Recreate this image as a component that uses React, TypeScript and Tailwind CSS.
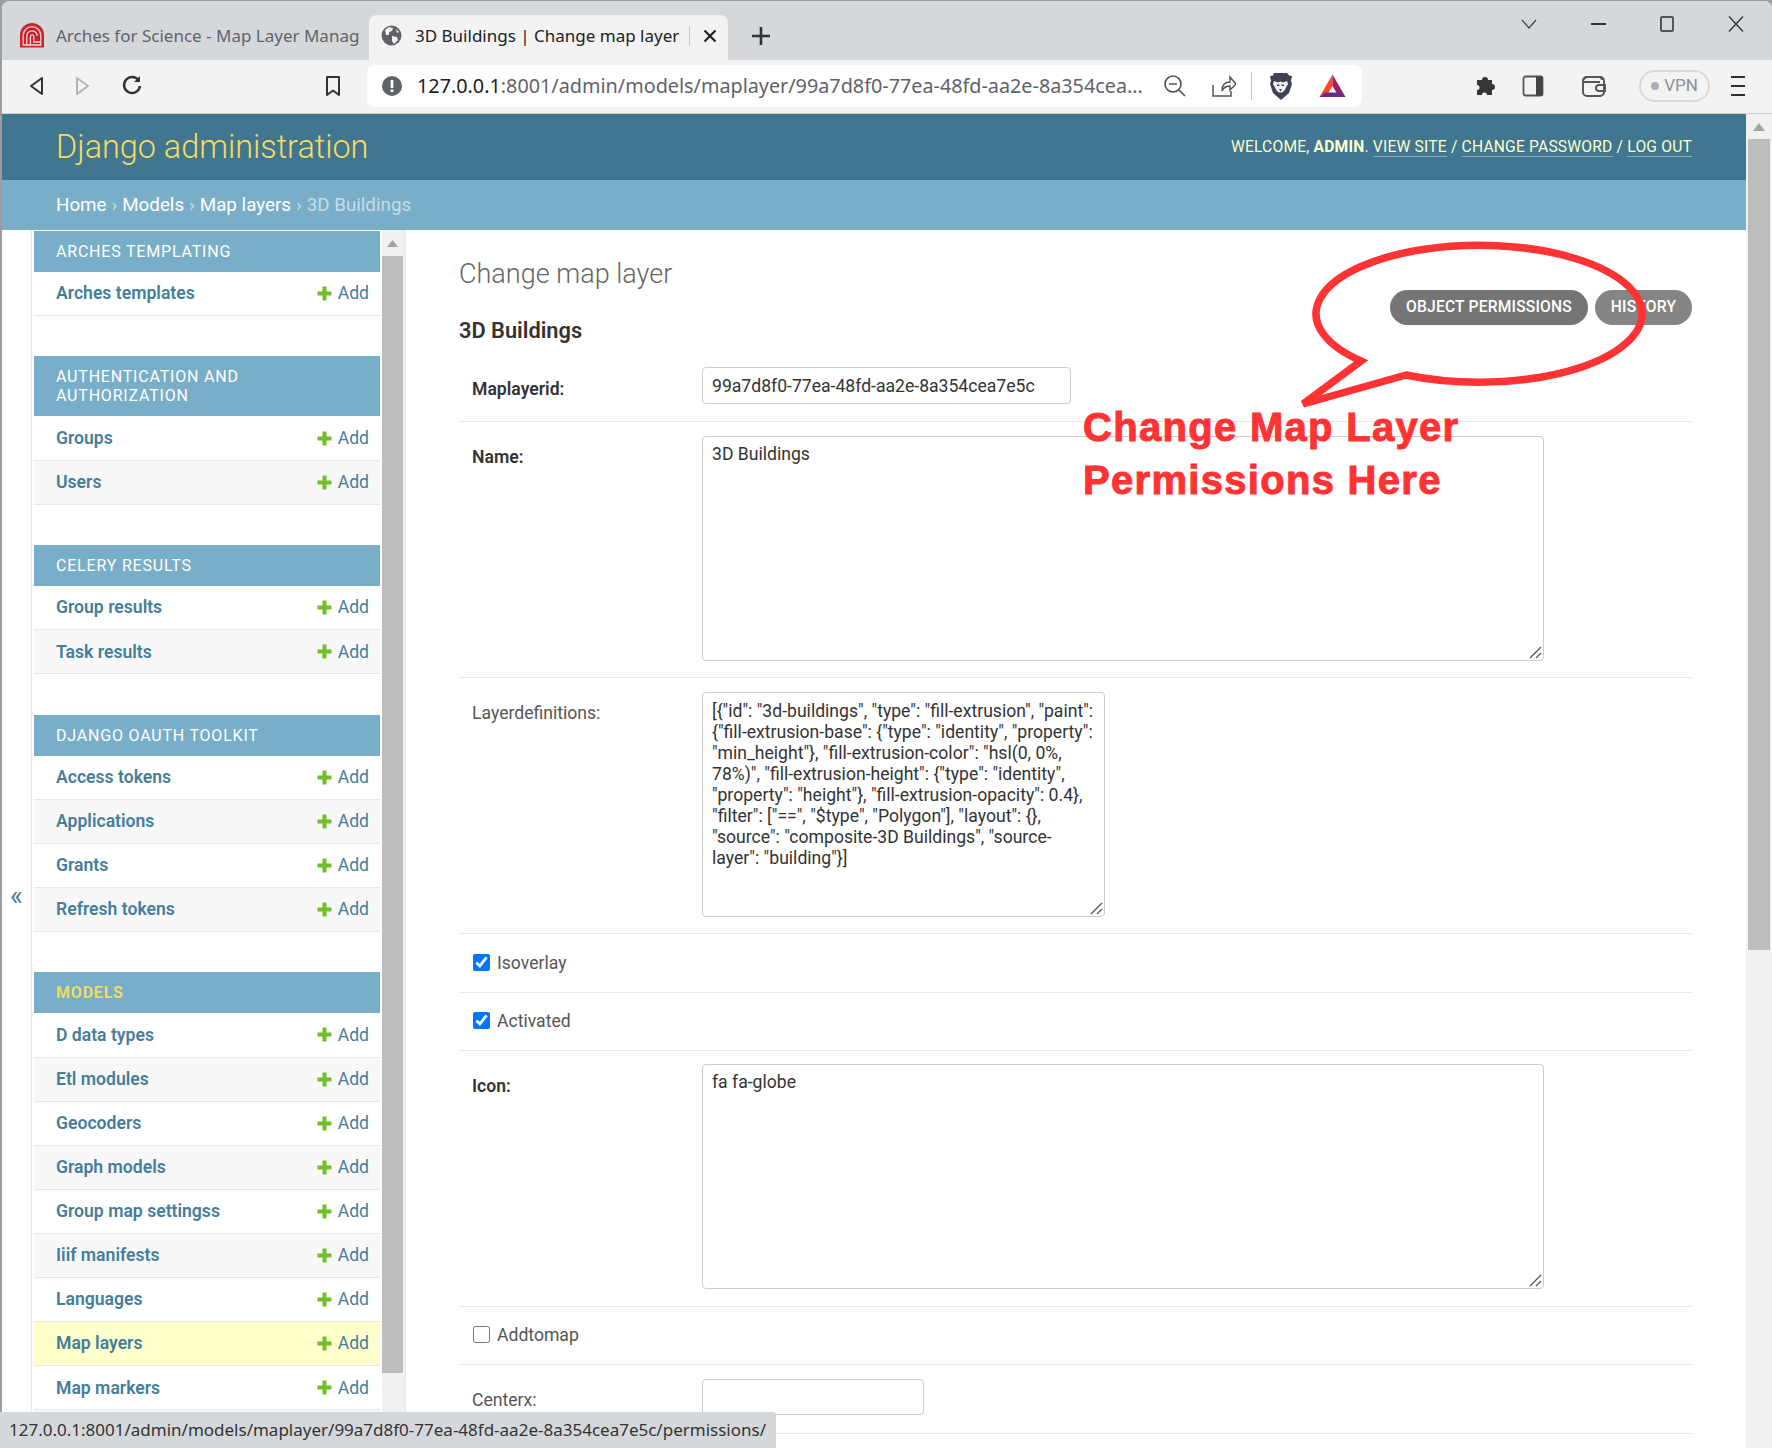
import React from 'react';

const sections = [
  { title: 'Arches templating', items: ['Arches templates'] },
  { title: 'Authentication and Authorization', items: ['Groups', 'Users'] },
  { title: 'Celery results', items: ['Group results', 'Task results'] },
  { title: 'Django OAuth Toolkit', items: ['Access tokens', 'Applications', 'Grants', 'Refresh tokens'] },
  {
    title: 'Models',
    active: true,
    items: ['D data types', 'Etl modules', 'Geocoders', 'Graph models', 'Group map settingss', 'Iiif manifests', 'Languages', 'Map layers', 'Map markers', 'Nodes'],
  },
];

const layerDefs =
  '[{"id": "3d-buildings", "type": "fill-extrusion", "paint": {"fill-extrusion-base": {"type": "identity", "property": "min_height"}, "fill-extrusion-color": "hsl(0, 0%, 78%)", "fill-extrusion-height": {"type": "identity", "property": "height"}, "fill-extrusion-opacity": 0.4}, "filter": ["==", "$type", "Polygon"], "layout": {}, "source": "composite-3D Buildings", "source-layer": "building"}]';

const PlusIcon = () => (
  <svg width="15" height="15" viewBox="0 0 15 15" className="shrink-0">
    <path d="M5.5 0.5h4v5h5v4h-5v5h-4v-5h-5v-4h5z" fill="#70bf2b" />
  </svg>
);

const ChromeGlyph = ({ children, className = '' }: { children: React.ReactNode; className?: string }) => (
  <svg width="26" height="26" viewBox="0 0 26 26" fill="none" stroke="#333" strokeWidth="2" className={className}>
    {children}
  </svg>
);

const Row = ({ name, shaded, current }: { name: string; shaded: boolean; current: boolean }) => (
  <div
    className={`flex h-[44.1px] items-center justify-between border-b border-[#e8e8e8] pl-[22px] pr-[11px] text-[17.6px] ${
      current ? 'bg-[#ffffcc]' : shaded ? 'bg-[#f8f8f8]' : 'bg-white'
    }`}
  >
    <span className="font-semibold text-[#447e9b]">{name}</span>
    <span className="flex items-center gap-[6px] text-[#447e9b]">
      <PlusIcon />
      Add
    </span>
  </div>
);

const Sidebar = () => (
  <div className="relative flex h-full w-[374px] shrink-0 overflow-hidden border-r border-[#e8e8e8]">
    <div className="ml-[2px] w-[346px] shrink-0 pt-px">
      {sections.map((s) => (
        <div key={s.title} className="mb-[40.4px]">
          <div
            className={`px-[22px] pt-[11px] pb-[11px] text-[16px] leading-[19px] tracking-[0.8px] uppercase ${
              s.active ? 'font-semibold text-[#f5dd5d]' : 'text-white'
            } bg-[#79aec8]`}
          >
            {s.title}
          </div>
          {s.items.map((item, i) => (
            <Row key={item} name={item} shaded={i % 2 === 1} current={item === 'Map layers'} />
          ))}
        </div>
      ))}
    </div>
    <div className="ml-[2px] flex w-[23px] shrink-0 flex-col bg-[#f1f1f1]">
      <div className="flex h-[26px] w-[21px] items-center justify-center">
        <svg width="11" height="7" viewBox="0 0 11 7">
          <path d="M5.5 0L11 7H0z" fill="#a3a3a3" />
        </svg>
      </div>
      <div className="h-[1117px] w-[21px] bg-[#bdbdbd]" />
    </div>
  </div>
);

const labelClass = 'w-[243px] shrink-0 pl-[13px] text-[17.6px]';
const boxClass = 'block rounded-[4px] border border-[#cccccc] bg-white px-[9px] text-[17.6px] leading-[21px] text-[#333]';

const CheckRow = ({ label, checked, height }: { label: string; checked: boolean; height: string }) => (
  <div className={`flex items-center border-b border-[#e8e8e8] pl-[14px] ${height}`}>
    <input type="checkbox" defaultChecked={checked} className="mb-[2px] h-[17px] w-[17px] accent-[#0075ff]" />
    <span className="ml-[7px] text-[17.6px] text-[#555]">{label}</span>
  </div>
);

const TextBox = ({ value, width, padding }: { value: string; width: string; padding: string }) => (
  <div className={`relative h-[225px] ${width}`}>
    <textarea readOnly value={value} className={`${boxClass} h-full w-full resize-none ${padding}`} />
    <svg width="14" height="14" viewBox="0 0 14 14" className="absolute right-[2px] bottom-[2px]" stroke="#555" strokeWidth="1.300">
      <path d="M2 13L13 2M8 13l5-5" />
    </svg>
  </div>
);

const Content = () => (
  <div className="h-full min-w-0 flex-1 overflow-hidden pl-[53px] pr-[54px]">
    <div className="flex justify-between">
      <div>
        <h1 className="pt-[25px] text-[27px] leading-[38px] font-light text-[#666]">Change map layer</h1>
        <h2 className="mt-[20px] text-[21.8px] leading-[36px] font-semibold text-[#333]">3D Buildings</h2>
      </div>
      <div className="flex gap-[7px] pt-[60px]">
        <span className="flex h-[35px] w-[198px] items-center justify-center rounded-full bg-[#757575] text-[15.6px] font-medium tracking-[0.2px] text-white">
          OBJECT PERMISSIONS
        </span>
        <span className="flex h-[35px] w-[97px] items-center justify-center rounded-full bg-[#858585] text-[15.6px] font-medium tracking-[0.2px] text-white">
          HISTORY
        </span>
      </div>
    </div>
    <div className="mt-[4px] flex border-b border-[#e8e8e8] pt-[14px] pb-[17px]">
      <label className={`${labelClass} pt-[9px] font-semibold text-[#333]`}>Maplayerid:</label>
      <input readOnly value="99a7d8f0-77ea-48fd-aa2e-8a354cea7e5c" className={`${boxClass} h-[37px] w-[369px] pt-[1px]`} />
    </div>
    <div className="flex border-b border-[#e8e8e8] pt-[14px] pb-[16px]">
      <label className={`${labelClass} pt-[8px] font-semibold text-[#333]`}>Name:</label>
      <TextBox value="3D Buildings" width="w-[842px]" padding="py-[7px]" />
    </div>
    <div className="flex border-b border-[#e8e8e8] pt-[14px] pb-[16px]">
      <label className={`${labelClass} pt-[8px] text-[#555]`}>Layerdefinitions:</label>
      <TextBox value={layerDefs} width="w-[403px]" padding="py-[8px]" />
    </div>
    <CheckRow label="Isoverlay" checked height="h-[59px]" />
    <CheckRow label="Activated" checked height="h-[58px]" />
    <div className="flex border-b border-[#e8e8e8] pt-[13px] pb-[17px]">
      <label className={`${labelClass} pt-[9px] font-semibold text-[#333]`}>Icon:</label>
      <TextBox value="fa fa-globe" width="w-[842px]" padding="py-[7px]" />
    </div>
    <CheckRow label="Addtomap" checked={false} height="h-[58px]" />
    <div className="flex border-b border-[#e8e8e8] pt-[14px] pb-[18px]">
      <label className={`${labelClass} pt-[8px] text-[#555]`}>Centerx:</label>
      <input readOnly className={`${boxClass} h-[36px] w-[222px]`} />
    </div>
  </div>
);

const TabBar = () => (
  <div className="flex h-[59px] shrink-0 items-end bg-[#d5d8db]">
    <div className="flex h-[45px] w-[365px] shrink-0 items-center pb-[4px] pl-[17px]">
      <svg width="26" height="25" viewBox="0 0 26 25" fill="none" className="shrink-0">
        <path d="M1 24.500V12a12 12 0 0 1 24 0v12.500z" fill="#c8242b" />
        <path d="M4.200 22V12.500a8.800 8.800 0 0 1 17.600 0V22zM7.800 22V13a5.200 5.200 0 0 1 10.400 0M11.400 22v-8.500a1.700 1.700 0 0 1 3.400 0V19h7" stroke="#f4d6d6" strokeWidth="1.300" />
      </svg>
      <span className="ml-[11px] w-[303px] overflow-hidden text-[17px] whitespace-nowrap text-[#5f6368] [font-family:'Noto_Sans',sans-serif]">
        Arches for Science - Map Layer Manager
      </span>
    </div>
    <div className="ml-[2px] flex h-[45px] w-[359px] shrink-0 items-center rounded-t-[8px] bg-[#f3f3f3] pb-[4px] pl-[12px]">
      <svg width="21" height="21" viewBox="0 0 21 21" className="shrink-0">
        <circle cx="10.500" cy="10.500" r="10" fill="#5f6368" />
        <path d="M4 5l4-3 4 1-1 3-3 1v3H5zM11 11l5 1 1 3-4 4-2-3zM15 4l3 3-2 1z" fill="#f3f3f3" />
      </svg>
      <span className="ml-[13px] w-[266px] overflow-hidden text-[17px] whitespace-nowrap text-[#202124] [font-family:'Noto_Sans',sans-serif]">
        3D Buildings | Change map layer | Django
      </span>
      <span className="ml-[8px] h-[20px] w-px bg-[#c4c7ca]" />
      <svg width="14" height="14" viewBox="0 0 14 14" className="ml-[13px]" stroke="#222" strokeWidth="2.200">
        <path d="M1.500 1.500l11 11M12.500 1.500l-11 11" />
      </svg>
    </div>
    <svg width="20" height="20" viewBox="0 0 20 20" className="mb-[14px] ml-[23px]" stroke="#333" strokeWidth="2.600">
      <path d="M10 1v18M1 10h18" />
    </svg>
    <div className="mb-[28px] ml-auto flex items-center">
      <svg width="16" height="10" viewBox="0 0 16 10" fill="none" stroke="#444" strokeWidth="1.200" className="mr-[54px]">
        <path d="M1 1l7 8 7-8" />
      </svg>
      <span className="mr-[54px] h-[1.500px] w-[15px] bg-[#333]" />
      <span className="mr-[54px] h-[16px] w-[14px] rounded-[2px] border-2 border-[#555]" />
      <svg width="16" height="16" viewBox="0 0 16 16" stroke="#333" strokeWidth="1.300" className="mr-[28px]">
        <path d="M1 0.500l14 15M15 0.500l-14 15" />
      </svg>
    </div>
  </div>
);

const Toolbar = () => (
  <div className="flex h-[54px] shrink-0 items-center border-b border-[#d0d0d0] bg-[#f3f3f3] pb-[2px]">
    <ChromeGlyph className="ml-[21px]">
      <path d="M19 5L8 13l11 8z" strokeLinejoin="round" />
    </ChromeGlyph>
    <ChromeGlyph className="ml-[21px]">
      <path d="M7 5l11 8-11 8z" stroke="#b4b4b4" strokeLinejoin="round" />
    </ChromeGlyph>
    <ChromeGlyph className="ml-[23px]">
      <path d="M20 8a8 8 0 1 0 1 5" strokeWidth="2.400" />
      <path d="M21 3v6h-6z" fill="#333" stroke="none" />
    </ChromeGlyph>
    <ChromeGlyph className="ml-[175px]">
      <path d="M7 4h12v18l-6-4.500L7 22z" strokeLinejoin="round" />
    </ChromeGlyph>
    <div className="ml-[21px] flex h-[42px] w-[995px] shrink-0 items-center rounded-[8px] bg-white">
      <svg width="20" height="20" viewBox="0 0 20 20" className="ml-[15px] shrink-0">
        <circle cx="10" cy="10" r="10" fill="#5f6368" />
        <rect x="8.700" y="4" width="2.600" height="8" fill="#fff" />
        <rect x="8.700" y="13.500" width="2.600" height="2.600" fill="#fff" />
      </svg>
      <span className="ml-[15px] w-[734px] overflow-hidden text-[19.8px] whitespace-nowrap text-[#5f6368] [font-family:'Noto_Sans',sans-serif]">
        <span className="text-[#202124]">127.0.0.1</span>:8001/admin/models/maplayer/99a7d8f0-77ea-48fd-aa2e-8a354cea...
      </span>
      <svg width="24" height="24" viewBox="0 0 24 24" fill="none" stroke="#555" strokeWidth="1.700" className="ml-[12px] shrink-0">
        <circle cx="10" cy="10" r="8" />
        <path d="M6 10h8M16 16l6 6" />
      </svg>
      <svg width="26" height="26" viewBox="0 0 26 26" fill="none" stroke="#555" strokeWidth="1.500" className="ml-[23px] shrink-0">
        <path d="M3 12v11h18v-5M12 18c0-6 3-9 8-9V4l6 7-6 6v-4c-4 0-6 1-8 5z" />
      </svg>
      <span className="ml-[15px] h-[28px] w-px shrink-0 bg-[#c4c7ca]" />
      <svg width="25" height="28" viewBox="0 0 25 28" className="ml-[16px] shrink-0">
        <path d="M6 1h13l2 2.500 3 0.500-1 5 1 3-3 9-8 7-8-7-3-9 1-3-1-5 3-0.500z" fill="#3f4257" />
        <path d="M6 9l4 1.500 2.500-1 2.500 1L19 9l1 3-2 3.500-1.500 3-4 3.500-4-3.500-1.500-3L5 12z" fill="#f3f3f6" />
        <path d="M9 12.500h2.500v1.500H9zM13.500 12.500H16v1.500h-2.500zM11 17h3l-1.500 2.500zM10 20.500h5l-2.500 2z" fill="#3f4257" />
      </svg>
      <svg width="27" height="24" viewBox="0 0 27 24" className="ml-[26px] shrink-0">
        <path d="M13.500 0.500L0.500 23H7l6.500-11z" fill="#ff4724" />
        <path d="M13.500 0.500L26.500 23H20l-6.500-11z" fill="#9e1f63" />
        <path d="M0.500 23L6 18.500h15l5.500 4.500z" fill="#662d91" />
      </svg>
    </div>
    <svg width="24" height="24" viewBox="0 0 24 24" className="ml-[112px] shrink-0" fill="#35363a">
      <path d="M3 6h5a3 3 0 1 1 6 0h4v4a3 3 0 1 1 0 6v5h-5a2.500 2.500 0 0 0-5 0H3v-5a2.500 2.500 0 0 0 0-5z" />
    </svg>
    <svg width="22" height="22" viewBox="0 0 22 22" className="ml-[24px] shrink-0">
      <rect x="1.500" y="1.500" width="19" height="19" rx="2" fill="none" stroke="#555" strokeWidth="1.800" />
      <rect x="14" y="1.500" width="6.500" height="19" fill="#444" />
    </svg>
    <svg width="26" height="24" viewBox="0 0 26 24" fill="none" stroke="#555" strokeWidth="1.900" className="ml-[37px] shrink-0">
      <rect x="2" y="3" width="21" height="19" rx="4" />
      <path d="M2 8c0-3 2-5 5-5h11c2 0 3 1 3 3M2 8h17M24 11h-6a2.500 2.500 0 0 0 0 6h6z" />
    </svg>
    <div className="ml-[32px] flex h-[32px] w-[71px] shrink-0 items-center justify-center gap-[5px] rounded-full border-2 border-[#d9d9d9] text-[17px] text-[#8a8fa0]">
      <span className="h-[8px] w-[8px] rounded-full bg-[#a9adbd]" />
      VPN
    </div>
    <div className="ml-[21px] flex w-[14px] shrink-0 flex-col gap-[7px]">
      <span className="h-[2px] bg-[#2f2f2f]" />
      <span className="h-[2px] bg-[#2f2f2f]" />
      <span className="h-[2px] bg-[#2f2f2f]" />
    </div>
  </div>
);

// callout drawn over the page, it is an annotation on top of the screenshot
const Callout = () => (
  <>
    <svg width="1772" height="1448" className="pointer-events-none absolute top-0 left-0">
      <path
        d="M1361 361A163 68.500 0 1 1 1406 375L1303 404z"
        fill="none"
        stroke="#ff3333"
        strokeWidth="7.500"
      />
    </svg>
    <div className="absolute top-[401px] left-[1083px] text-[40px] leading-[53px] font-bold tracking-[1.3px] whitespace-nowrap text-[#ff3333] [-webkit-text-stroke:1px_#ff3333] [font-family:'Liberation_Sans',Arial,sans-serif]">
      Change Map Layer
      <br />
      Permissions Here
    </div>
  </>
);

export default function App() {
  return (
    <div className="relative h-[1448px] w-[1772px] overflow-hidden bg-[#9d9d9d] [font-family:Roboto,sans-serif]">
      <div className="ml-[2px] mt-px flex h-[1447px] flex-col overflow-hidden rounded-t-[8px] bg-white">
        <TabBar />
        <Toolbar />
        <div className="flex min-h-0 flex-1">
          <div className="flex min-w-0 flex-1 flex-col">
            <div className="flex h-[66px] shrink-0 items-center justify-between bg-[#417690] pl-[54px] pr-[54px]">
              <span className="text-[32.4px] font-light text-[#f5dd5d]">Django administration</span>
              <span className="pt-[2px] text-[15.6px] tracking-[0.2px] text-[#ffffcc]">
                WELCOME, <strong className="font-bold">ADMIN</strong>.{' '}
                <span className="border-b border-white/40 text-[#ffffcc]">VIEW SITE</span> /{' '}
                <span className="border-b border-white/40">CHANGE PASSWORD</span> /{' '}
                <span className="border-b border-white/40">LOG OUT</span>
              </span>
            </div>
            <div className="flex h-[50px] shrink-0 items-center bg-[#79aec8] pl-[54px] text-[18.8px] text-white">
              Home<span className="mx-[5px] text-[#c4dce8]">›</span>Models
              <span className="mx-[5px] text-[#c4dce8]">›</span>Map layers
              <span className="mx-[5px] text-[#c4dce8]">›</span>
              <span className="text-[#c4dce8]">3D Buildings</span>
            </div>
            <div className="flex min-h-0 flex-1">
              <div className="w-[30px] shrink-0 border-r border-[#e8e8e8] pt-[651px] pl-[8px] text-[27px] leading-[30px] text-[#447e9b]">
                «
              </div>
              <Sidebar />
              <Content />
            </div>
          </div>
          <div className="flex w-[26px] shrink-0 flex-col bg-[#f1f1f1]">
            <div className="flex h-[25px] items-center justify-center">
              <svg width="12" height="8" viewBox="0 0 12 8">
                <path d="M6 0l6 8H0z" fill="#a3a3a3" />
              </svg>
            </div>
            <div className="mx-auto h-[811px] w-[22px] bg-[#bdbdbd]" />
          </div>
        </div>
      </div>
      <Callout />
      <div className="absolute bottom-0 left-0 flex h-[36px] w-[776px] items-center rounded-tr-[3px] bg-[#d5d8db] pl-[9px] text-[17px] whitespace-nowrap text-[#333] [font-family:'Noto_Sans',sans-serif]">
        127.0.0.1:8001/admin/models/maplayer/99a7d8f0-77ea-48fd-aa2e-8a354cea7e5c/permissions/
      </div>
    </div>
  );
}
